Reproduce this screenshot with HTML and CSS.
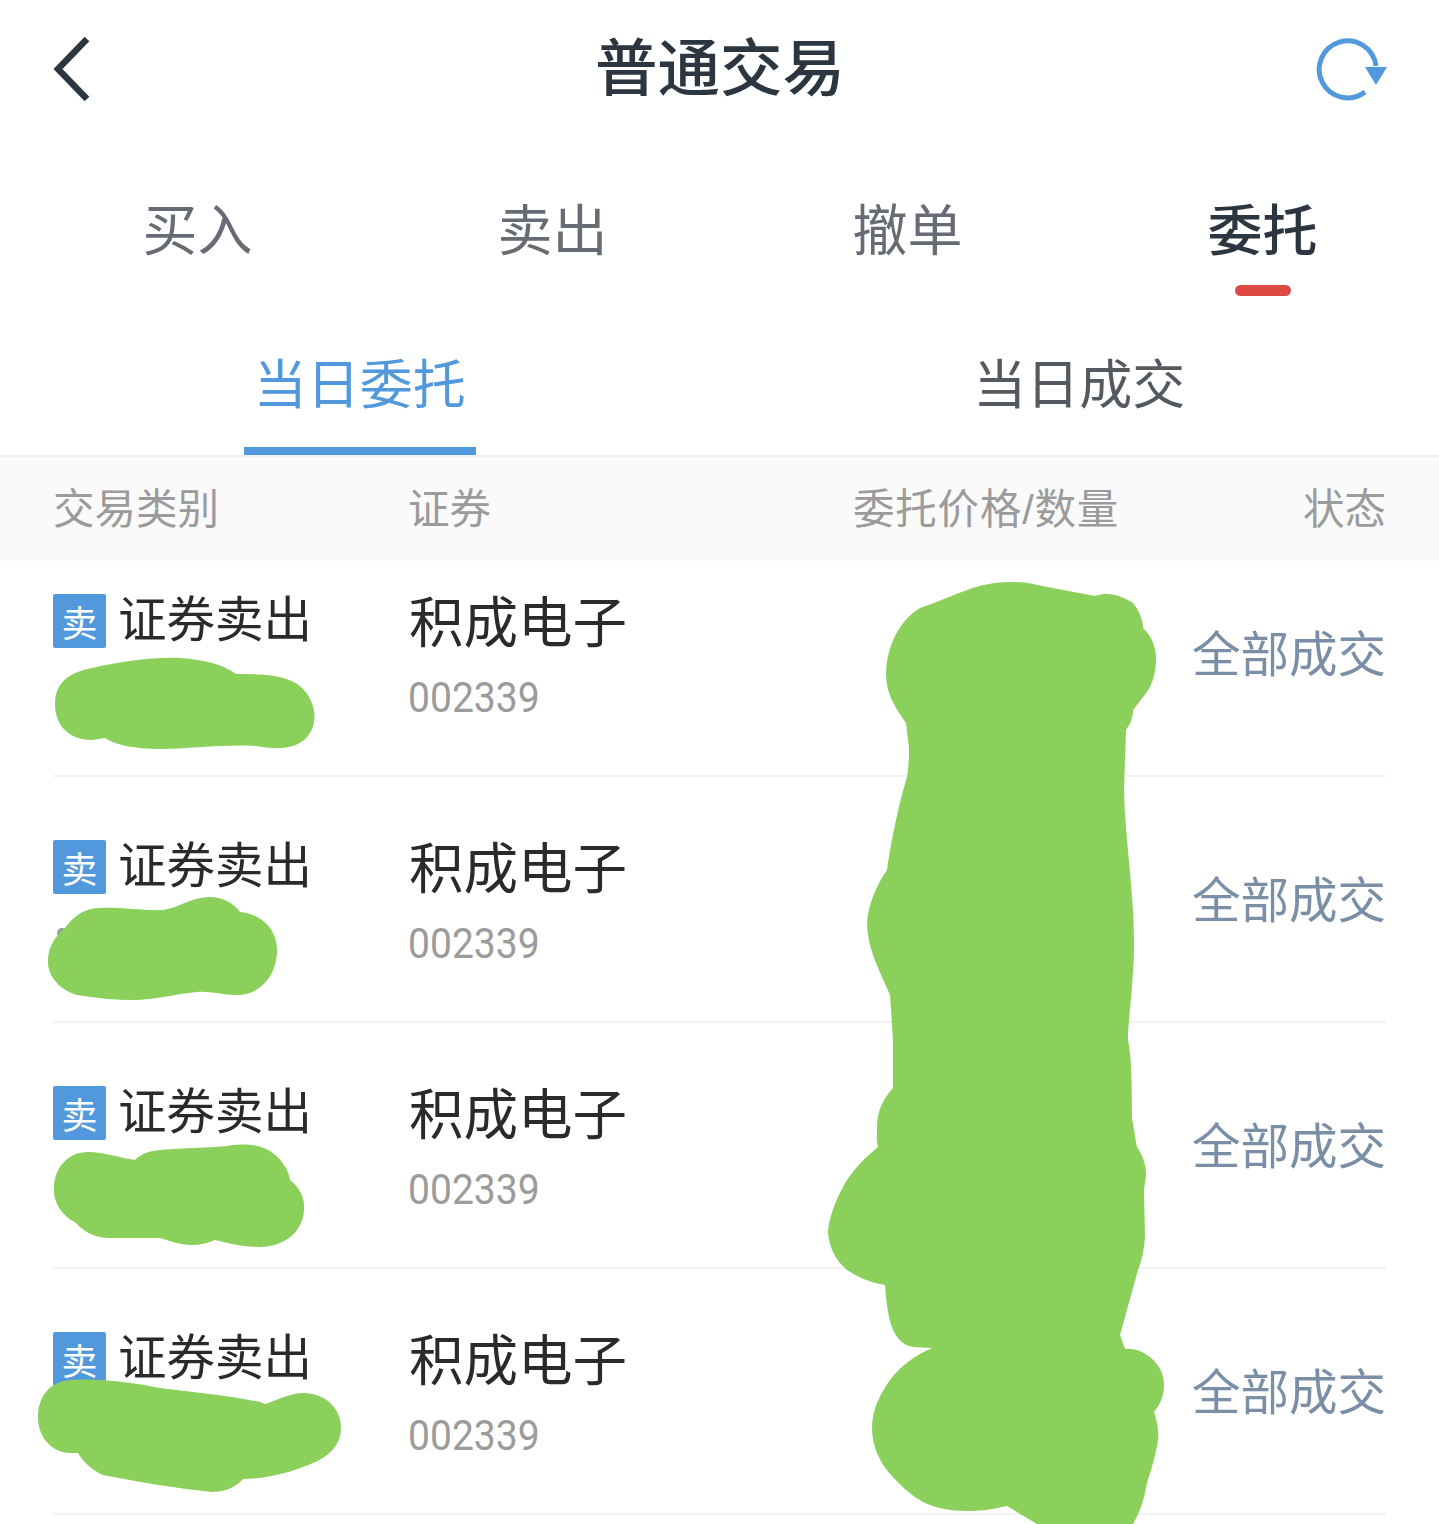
FILE: index.html
```html
<!DOCTYPE html>
<html lang="zh">
<head>
	<meta charset="utf-8">
	<title>普通交易</title>
	<link rel="stylesheet" href="styles.css">
</head>
<body>
	<div class="page">
		<div class="topbar">
			<svg class="back_icon" width="40" height="66" viewBox="0 0 40 66"><path d="M35 3 L6 33 L35 63" fill="none" stroke="#2b3640" stroke-width="6.500"/></svg>
			<h1 class="title">普通交易</h1>
			<svg class="refresh_icon" width="72" height="66" viewBox="0 0 72 66"><path d="M60 30 A28.500 28.500 0 1 0 49 56" fill="none" stroke="#5199dc" stroke-width="5"/><path d="M49 31 H71 L60 49 Z" fill="#5199dc"/></svg>
		</div>

		<ul class="main_tabs">
			<li>买入</li>
			<li>卖出</li>
			<li>撤单</li>
			<li class="on">委托</li>
		</ul>

		<ul class="sub_tabs">
			<li class="on"><span>当日委托</span></li>
			<li><span>当日成交</span></li>
		</ul>

		<div class="table_head">
			<div>交易类别</div>
			<div>证券</div>
			<div class="price_head">委托价格/数量</div>
			<div>状态</div>
		</div>

		<div class="row row_first">
			<div class="kind"><span class="sell_tag">卖</span><span class="kind_name">证券卖出</span></div>
			<div class="stock"><p class="stock_name">积成电子</p><p class="stock_code">002339</p></div>
			<div class="price"></div>
			<div class="state">全部成交</div>
		</div>
		<div class="row">
			<div class="kind"><span class="sell_tag">卖</span><span class="kind_name">证券卖出</span></div>
			<div class="stock"><p class="stock_name">积成电子</p><p class="stock_code">002339</p></div>
			<div class="price"></div>
			<div class="state">全部成交</div>
		</div>
		<div class="row">
			<div class="kind"><span class="sell_tag">卖</span><span class="kind_name">证券卖出</span></div>
			<div class="stock"><p class="stock_name">积成电子</p><p class="stock_code">002339</p></div>
			<div class="price"></div>
			<div class="state">全部成交</div>
		</div>
		<div class="row">
			<div class="kind"><span class="sell_tag">卖</span><span class="kind_name">证券卖出</span></div>
			<div class="stock"><p class="stock_name">积成电子</p><p class="stock_code">002339</p></div>
			<div class="price"></div>
			<div class="state">全部成交</div>
		</div>

		<!-- painted over the screenshot by hand -->
		<svg class="scribble" width="1439" height="1524" viewBox="0 0 1439 1524">
			<circle class="scrap" cx="62" cy="933" r="5"/>
			<path d="M92 740 C66 740 54 722 55 702 C56 682 70 672 92 668 C120 662 150 657 180 658 C205 660 222 664 236 674 C262 674 290 674 304 690 C318 706 318 728 304 740 C292 750 275 749 255 746 C225 744 190 749 160 749 C135 749 115 745 105 738 Z"/>
			<path d="M65 928 C74 916 84 908 100 908 C120 907 145 911 163 910 C178 908 192 897 210 897 C224 897 234 904 240 912 C262 914 278 930 277 952 C276 978 258 996 235 995 C222 995 210 991 197 992 C175 994 155 1000 133 1000 C115 1000 95 998 77 995 C60 990 47 976 48 960 C48 948 55 936 65 928 Z"/>
			<path d="M88 1152 C104 1152 120 1158 135 1160 C142 1153 150 1151 160 1150 C182 1148 205 1148 227 1146 C245 1143 262 1144 274 1154 C284 1162 289 1172 290 1180 C300 1188 305 1198 304 1210 C303 1232 284 1247 260 1247 C245 1247 230 1244 215 1240 C206 1244 198 1245 192 1245 C180 1245 170 1241 160 1238 C142 1238 125 1238 107 1238 C92 1237 82 1230 75 1222 C62 1216 53 1202 54 1188 C54 1168 68 1152 88 1152 Z"/>
			<path d="M70 1380 C100 1378 130 1382 160 1388 C195 1392 230 1396 260 1402 L265 1404 C278 1400 290 1393 303 1393 C325 1393 341 1408 341 1428 C341 1444 330 1456 313 1463 C290 1473 265 1479 243 1479 C235 1488 224 1492 212 1492 C175 1488 138 1482 103 1475 C92 1470 83 1462 78 1453 L70 1453 C50 1452 38 1436 38 1417 C38 1396 50 1382 70 1380 Z"/>
			<path d="M1010 582 C1020 582 1030 583 1037 585 L1095 596 C1110 591 1122 596 1133 603 C1139 610 1143 620 1143 628 C1152 636 1156 648 1156 658 C1156 672 1153 683 1147 692 L1133 710 C1133 718 1130 724 1126 730 L1124 790 C1125 840 1134 890 1134 943 C1134 975 1130 1005 1128 1033 L1128 1040 C1131 1055 1132 1073 1132 1118 C1134 1128 1135 1138 1137 1147 C1143 1156 1146 1165 1146 1175 L1144 1190 L1145 1237 C1144 1250 1142 1260 1138 1270 L1120 1335 L1125 1349 C1132 1348 1140 1350 1147 1355 C1158 1362 1164 1373 1164 1385 C1164 1396 1160 1405 1154 1412 C1158 1425 1159 1432 1158 1440 C1156 1455 1151 1470 1147 1483 C1144 1500 1140 1512 1133 1524 L1037 1524 L1007 1506 C990 1510 980 1511 967 1511 C950 1511 935 1508 923 1502 C912 1496 902 1487 893 1477 C880 1464 872 1446 872 1428 C872 1410 880 1394 890 1380 C902 1364 918 1354 932 1348 L913 1347 C902 1345 897 1338 893 1330 C888 1318 886 1300 885 1285 C868 1282 858 1277 847 1270 C835 1260 828 1245 828 1230 C830 1215 836 1200 843 1187 C852 1170 865 1158 878 1147 C876 1140 877 1134 877 1127 C877 1110 884 1098 893 1088 L893 1040 L890 995 C880 972 867 948 867 923 C868 905 877 884 887 870 C892 835 900 800 907 777 C909 765 909 755 909 748 L906 723 C896 708 886 695 886 673 C887 645 900 620 920 608 C935 603 950 596 967 590 C980 585 995 582 1010 582 Z"/>
		</svg>
	</div>
</body>
</html>
```

FILE: styles.css
```css
*
{
	box-sizing:border-box;
}
html,body
{
	margin:0;
	padding:0;
	background-color:#ffffff;
}
ul
{
	margin:0;
	padding:0;
	list-style-type:none;
}
p
{
	margin:0;
}
.page
{
	position:relative;
	width:1439px;
	height:1524px;
	overflow:hidden;
	font-family:"Liberation Sans","Noto Sans CJK SC",sans-serif;
}

.topbar
{
	display:grid;
	grid-template-columns:1fr auto 1fr;
	align-items:center;
	height:139px;
	padding:0 51px 2px 52px;
}
.refresh_icon
{
	justify-self:end;
}
.title
{
	margin:0 0 10px 0;
	font-size:62.500px;
	font-weight:500;
	color:#2b3640;
}

.main_tabs
{
	display:grid;
	grid-template-columns:repeat(4,1fr);
	height:167px;
	padding:0 0 0 20px;
	margin-right:-1px;
}
.main_tabs li
{
	position:relative;
	padding-top:50px;
	line-height:84px;
	height:167px;
	font-size:55px;
	text-align:center;
	color:#676b73;
}
.main_tabs li.on
{
	color:#2b3640;
	font-weight:500;
}
.main_tabs li.on:after
{
	content:"";
	position:absolute;
	left:50%;
	top:146px;
	width:56px;
	height:11px;
	margin-left:-28px;
	border-radius:6px;
	background-color:#dc4a43;
}

.sub_tabs
{
	display:grid;
	grid-template-columns:1fr 1fr;
	height:151px;
	border-bottom:2px solid #eeeeee;
}
.sub_tabs li
{
	display:flex;
	justify-content:center;
	font-size:53px;
	color:#54585f;
}
.sub_tabs span
{
	display:block;
	width:232px;
	padding-top:40px;
	line-height:80px;
	height:149px;
	text-align:center;
}
.sub_tabs li.on
{
	color:#5199dc;
}
.sub_tabs li.on span
{
	border-bottom:8px solid #5199dc;
}

.table_head,.row
{
	display:grid;
	grid-template-columns:356px 444px 1fr auto;
}
.table_head
{
	height:104px;
	padding:0 53px 6px 53px;
	align-items:center;
	background-color:#fafafa;
	font-size:41.500px;
	color:#9b9b9b;
}
.table_head div:nth-child(2)
{
	margin-left:-1px;
}
.price_head
{
	letter-spacing:0.800px;
}

.row
{
	height:246px;
	margin:0 53px;
	padding-top:63px;
	border-bottom:2px solid #f2f2f2;
	font-size:48.500px;
	color:#2a2a2a;
}
.row_first
{
	height:216px;
	padding-top:33px;
}
.kind
{
	display:flex;
	align-items:center;
	height:54px;
	white-space:nowrap;
}
.kind_name
{
	padding-bottom:10px;
}
.sell_tag
{
	display:flex;
	align-items:center;
	justify-content:center;
	width:53px;
	height:54px;
	margin-right:12px;
	border-radius:2px;
	background-color:#5199dc;
	font-size:36px;
	color:#ffffff;
}
.stock
{
	margin-top:-4px;
}
.stock_name
{
	font-size:54.500px;
	line-height:68px;
}
.stock_code
{
	margin-top:15px;
	margin-left:-1px;
	font-family:Roboto,sans-serif;
	font-size:42px;
	line-height:50px;
	color:#9b9b9b;
	transform:scaleX(0.930);
	transform-origin:left center;
}
.state
{
	margin-top:26px;
	line-height:70px;
	color:#7a8fa6;
}

.scribble
{
	position:absolute;
	left:0;
	top:0;
}
.scribble path
{
	fill:#8bd05b;
}
.scribble .scrap
{
	fill:#9b9b9b;
}
```
